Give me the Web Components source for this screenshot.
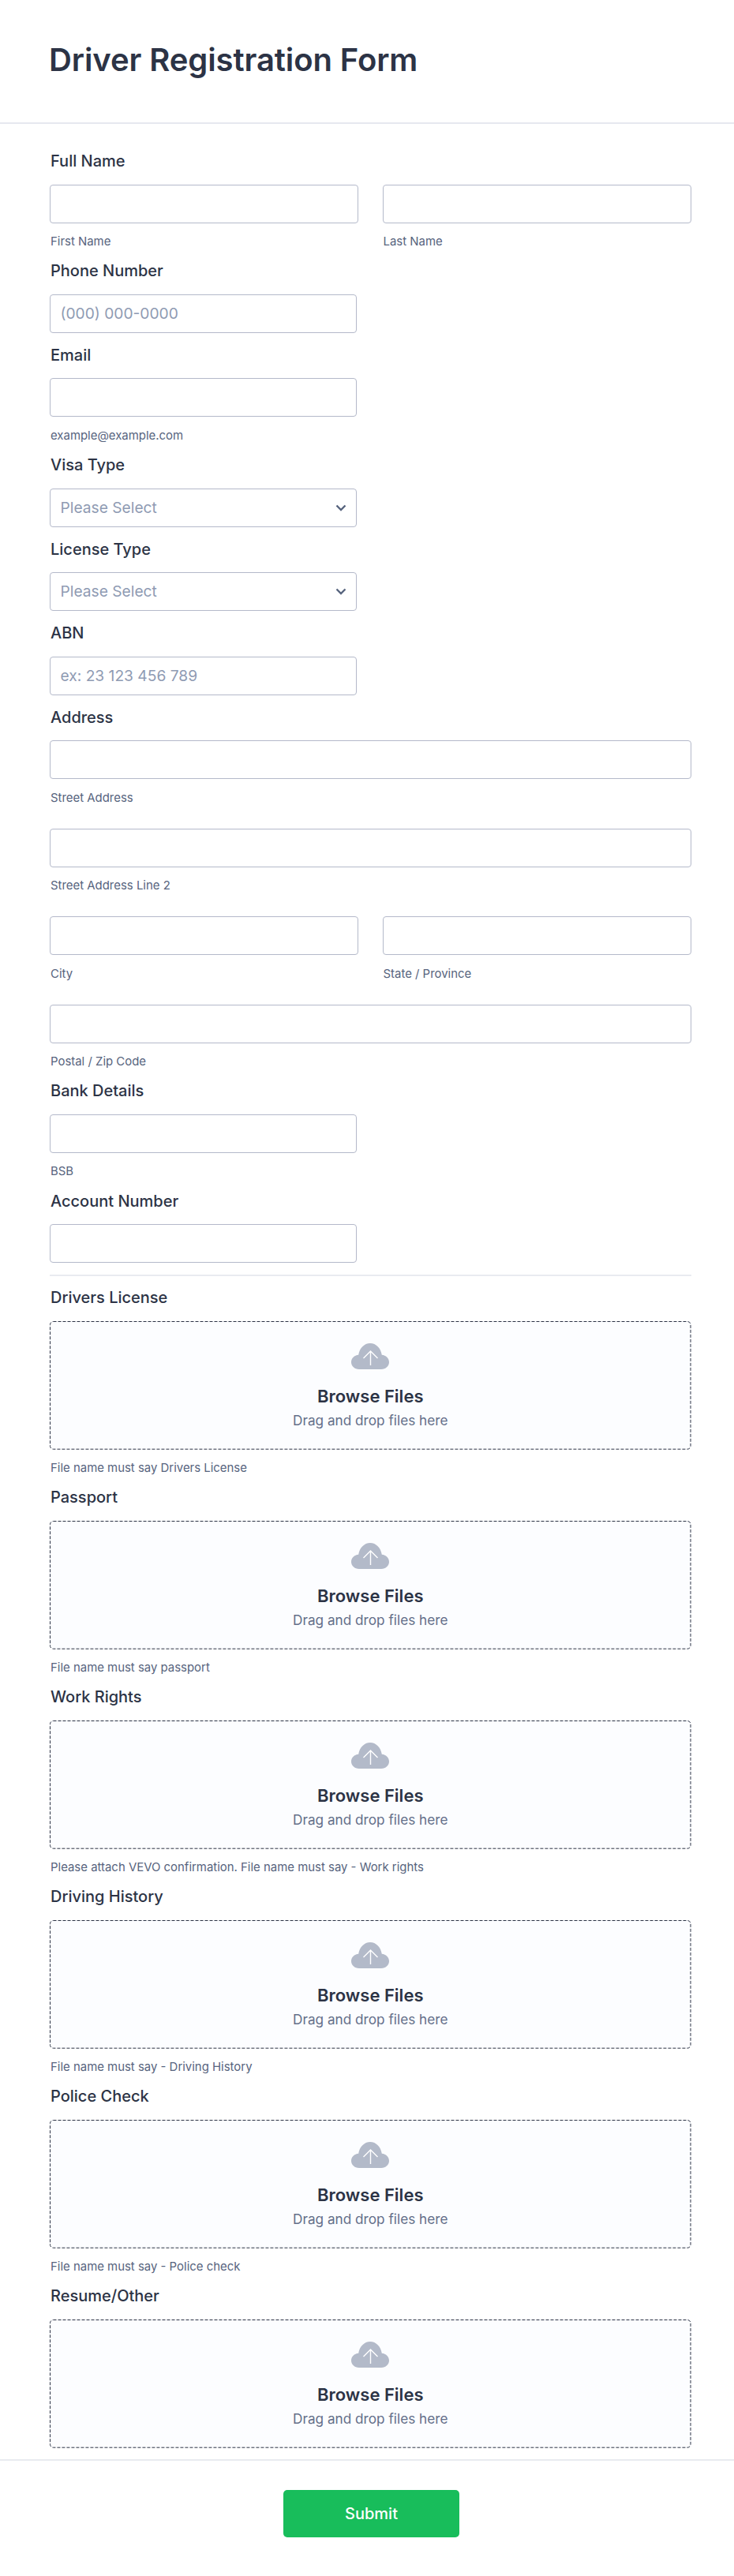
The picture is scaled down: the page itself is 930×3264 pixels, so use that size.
<!DOCTYPE html>
<html lang="en">
<head>
<meta charset="utf-8">
<title>Driver Registration Form</title>
<style>
  html, body { margin: 0; padding: 0; background: #fff; }
  body { font-family: Inter, "Liberation Sans", sans-serif; color: #2c3345; }
</style>
</head>
<body>
<driver-form>
  <form-header slot="header">Driver Registration Form</form-header>

  <form-field label="Full Name">
    <field-row>
      <text-box half sub="First Name"></text-box>
      <text-box half sub="Last Name"></text-box>
    </field-row>
  </form-field>
  <form-field label="Phone Number"><text-box narrow hint="(000) 000-0000"></text-box></form-field>
  <form-field label="Email"><text-box narrow sub="example@example.com"></text-box></form-field>
  <form-field label="Visa Type"><text-box narrow select hint="Please Select"></text-box></form-field>
  <form-field label="License Type"><text-box narrow select hint="Please Select"></text-box></form-field>
  <form-field label="ABN"><text-box narrow hint="ex: 23 123 456 789"></text-box></form-field>
  <form-field label="Address">
    <field-stack>
      <text-box sub="Street Address"></text-box>
      <text-box sub="Street Address Line 2"></text-box>
      <field-row>
        <text-box half sub="City"></text-box>
        <text-box half sub="State / Province"></text-box>
      </field-row>
      <text-box sub="Postal / Zip Code"></text-box>
    </field-stack>
  </form-field>
  <form-field label="Bank Details"><text-box narrow sub="BSB"></text-box></form-field>
  <form-field label="Account Number"><text-box narrow></text-box></form-field>
  <form-divider></form-divider>
  <form-field label="Drivers License"><upload-box sub="File name must say Drivers License"></upload-box></form-field>
  <form-field label="Passport"><upload-box sub="File name must say passport"></upload-box></form-field>
  <form-field label="Work Rights"><upload-box sub="Please attach VEVO confirmation. File name must say - Work rights"></upload-box></form-field>
  <form-field label="Driving History"><upload-box sub="File name must say - Driving History"></upload-box></form-field>
  <form-field label="Police Check"><upload-box sub="File name must say - Police check"></upload-box></form-field>
  <form-field label="Resume/Other"><upload-box></upload-box></form-field>

  <form-footer slot="footer">Submit</form-footer>
</driver-form>

<script>
  const define = (name, css, html, setup) => {
    customElements.define(name, class extends HTMLElement {
      constructor() {
        super();
        this.attachShadow({ mode: 'open' }).innerHTML = `<style>${css}</style>${html}`;
      }
      connectedCallback() { if (setup) setup(this, this.shadowRoot); }
    });
  };

  define('driver-form',
    `:host { display: block; width: 930px; height: 3264px; box-sizing: border-box; background: #fff; }
     main { padding: 33.1px 54.5px 0 63px; }`,
    `<slot name="header"></slot><main><slot></slot></main><slot name="footer"></slot>`);

  define('form-header',
    `:host { display: block; box-sizing: border-box; height: 157px; padding: 52px 0 0 62px; border-bottom: 2px solid #e6e8ef; }
     h1 { margin: 0; font: 600 40px/48px Inter, sans-serif; letter-spacing: -.1px; color: #2c3345; }`,
    `<h1><slot></slot></h1>`);

  define('form-field',
    `:host { display: block; padding-bottom: 14px; }
     label { display: block; height: 27px; margin-bottom: 16.5px; padding-left: 1px; font: 500 20px/29px Inter, sans-serif; color: #2c3345; }`,
    `<label></label><slot></slot>`,
    (el, root) => { root.querySelector('label').textContent = el.getAttribute('label'); });

  define('field-row',
    `:host { display: flex; gap: 30.5px; }`,
    `<slot></slot>`);

  define('field-stack',
    `:host { display: flex; flex-direction: column; gap: 29.7px; }`,
    `<slot></slot>`);

  define('sub-label',
    `:host { display: block; padding: 14.5px 0 0 1px; font: 400 14.93px/18.3px Inter, sans-serif; color: #57647e; }`,
    `<slot></slot>`);

  define('text-box',
    `:host { display: block; width: 812.5px; }
     :host([half]) { width: 391px; }
     :host([narrow]) { width: 388.5px; }
     .box { display: flex; align-items: center; justify-content: space-between; box-sizing: border-box; height: 49px;
            padding: 0 11.5px 0 12.5px; background: #fff; border: 1px solid #b4b9ca; border-radius: 4px;
            font: 400 19.2px/25px Inter, sans-serif; color: #8f9bb3; }
     svg { display: block; flex: none; }`,
    `<div class="box"><span class="hint"></span></div>`,
    (el, root) => {
      root.querySelector('.hint').textContent = el.getAttribute('hint') || '';
      if (el.hasAttribute('select')) {
        root.querySelector('.box').insertAdjacentHTML('beforeend',
          `<svg width="14" height="9" viewBox="0 0 14 9"><path d="M1.5 1.5 7 7l5.5-5.5" fill="none" stroke="#57647e" stroke-width="2.4"/></svg>`);
      }
      if (el.hasAttribute('sub')) {
        const s = document.createElement('sub-label');
        s.textContent = el.getAttribute('sub');
        root.appendChild(s);
      }
    });

  define('upload-box',
    `:host { display: block; width: 812.5px; }
     .zone { position: relative; display: flex; flex-direction: column; align-items: center; box-sizing: border-box; height: 162.7px; padding-top: 27px;
             background: #fcfdff; border-radius: 4px; }
     .edge { position: absolute; inset: 0; width: 100%; height: 100%; overflow: visible; }
     .edge rect { width: calc(100% - 1px); height: calc(100% - 1px); fill: none; stroke: #2c3345; stroke-width: 1; stroke-dasharray: 4 2; }
     .cloud { display: block; margin-top: 1px; }
     b { margin-top: 21px; font: 600 22px/26px Inter, sans-serif; color: #2c3345; }
     span { margin-top: 7px; font: 400 17.2px/22px Inter, sans-serif; color: #646f8a; }`,
    `<div class="zone">
       <svg class="edge" aria-hidden="true"><rect x=".5" y=".5" rx="4" ry="4"/></svg>
       <svg class="cloud" width="48" height="33" viewBox="0 0 48 33" aria-hidden="true">
         <path d="M10 33C4.300 33 0 28.800 0 24c0-5 4-9 9.200-9.300C10.500 6.300 16.600 0 24 0s13.500 6.300 14.800 14.700C44 15 48 19 48 24c0 4.800-4.300 9-10 9Z" fill="#b3bac9"/>
         <path d="M24.500 28V10M15.500 19l9-9 9 9" fill="none" stroke="#fff" stroke-width="1.4"/>
       </svg>
       <b>Browse Files</b>
       <span>Drag and drop files here</span>
     </div>`,
    (el, root) => {
      if (el.hasAttribute('sub')) {
        const s = document.createElement('sub-label');
        s.textContent = el.getAttribute('sub');
        root.appendChild(s);
      }
    });

  define('form-divider',
    `:host { display: block; height: 2px; margin: 1px 0 13px; background: #e9ebf0; }`,
    ``);

  define('form-footer',
    `:host { display: flex; justify-content: center; box-sizing: border-box; padding: 37px 0 0 11px; border-top: 2px solid #e9ebf0; margin-top: .5px; }
     button { width: 223px; height: 60px; padding: 0; border: 0; border-radius: 5px; background: #18bd5b;
              font: 500 20px/24px Inter, sans-serif; color: #fff; }`,
    `<button type="button"><slot></slot></button>`);
</script>
</body>
</html>
